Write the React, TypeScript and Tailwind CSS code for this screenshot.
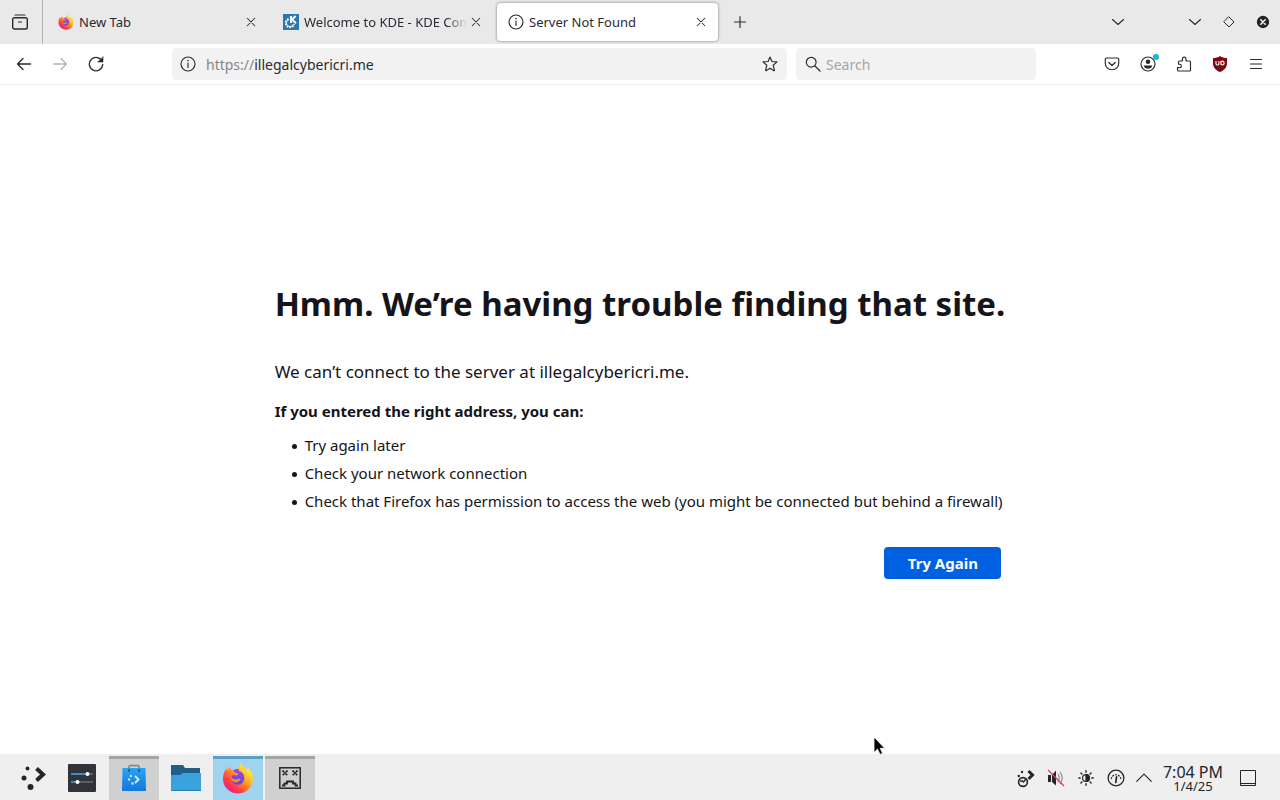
import { useState } from "react";
import type { ReactNode } from "react";

type IconProps = { className?: string; children: ReactNode };

function Icon({ className = "size-4", children }: IconProps) {
  return (
    <svg
      viewBox="0 0 16 16"
      className={`shrink-0 ${className}`}
      fill="none"
      stroke="currentColor"
      strokeWidth="1.15"
      strokeLinecap="round"
      strokeLinejoin="round"
      aria-hidden="true"
    >
      {children}
    </svg>
  );
}

function FirefoxLogo({ className }: { className: string }) {
  return (
    <svg viewBox="0 0 32 32" className={`shrink-0 ${className}`} aria-hidden="true">
      <defs>
        <linearGradient id="fx-body" x1="0.85" y1="0.1" x2="0.15" y2="0.9">
          <stop offset="0" stopColor="#fff14f" />
          <stop offset="0.3" stopColor="#ffc12f" />
          <stop offset="0.55" stopColor="#ff7a2a" />
          <stop offset="0.8" stopColor="#ff3550" />
          <stop offset="1" stopColor="#e8258a" />
        </linearGradient>
        <linearGradient id="fx-core" x1="0.5" y1="0" x2="0.4" y2="1">
          <stop offset="0" stopColor="#a243e6" />
          <stop offset="1" stopColor="#5a4fd0" />
        </linearGradient>
      </defs>
      <path
        d="M19.500 0.500c.3 3.400 2.700 5 5 7.300l1.200-2c3.600 2.800 5.600 7.200 5.300 12C30.500 25.700 24 31.500 16 31.500S1 25 1 17.200c0-4.700 1.200-8 3.500-11.200l.5 3 2.500-4.500C8 6.500 9 7.500 10.500 8.200c3.500-.6 5-1 6-2.700.9-1.700 1.500-3.500 3-5z"
        fill="url(#fx-body)"
      />
      <path
        d="M11 9c1.500-1.800 4-2.500 6.500-1.500l-1.500 1.500c3.500 0 6.500 3 6.300 7.300-.2 3.800-3 6.400-6.600 6.400-3.800 0-6.800-3-6.500-6.600 0-1.400.6-2 1.400-2.600 1.200-.7 2.600-.5 3.600.2.900-.8 2.100-.9 2.100-1.600 0-1-2.500-.7-3-1.400-.3-.7-1-1.300-2.300-1.700z"
        fill="url(#fx-core)"
      />
      <path
        d="M8.500 14.500c2 2.200 4.500 3.700 7 2.700 1.500-.6 2.700-.5 3.300.3-1 1-2.600 2.900-5 2.900-2.500 0-5-2.400-5.300-5.900z"
        fill="#ff8a28"
      />
    </svg>
  );
}

function KdeLogo() {
  return (
    <svg viewBox="0 0 16 16" className="size-4 shrink-0" aria-hidden="true">
      <rect width="16" height="16" fill="#2a78b0" />
      <circle cx="7" cy="9" r="4.500" fill="none" stroke="#fff" strokeWidth="1.500" strokeDasharray="1.700 1.200" />
      <circle cx="7" cy="9" r="3.600" fill="none" stroke="#fff" strokeWidth="1" />
      <path d="M6 1h10v9H6z" fill="#2a78b0" />
      <path d="M8 2v7M12.700 2 9 5.500 13 9.200" fill="none" stroke="#fff" strokeWidth="1.900" />
    </svg>
  );
}

function InfoIcon() {
  return (
    <Icon>
      <circle cx="8" cy="8" r="7" />
      <path d="M8 7v4.500" />
      <path d="M8 4.500v.1" strokeWidth="1.600" />
    </Icon>
  );
}

function ChevronDown({ className = "size-4" }: { className?: string }) {
  return (
    <Icon className={className}>
      <path d="m2.500 5.500 5.500 5 5.500-5" />
    </Icon>
  );
}

function TabClose({ label }: { label: string }) {
  return (
    <button type="button" aria-label={label} className="flex size-6 shrink-0 items-center justify-center text-[#333338]">
      <Icon className="size-3">
        <path d="m3 3 10 10M13 3 3 13" strokeWidth="1.400" />
      </Icon>
    </button>
  );
}

type TabProps = { title: string; icon: ReactNode; active?: boolean; faded?: boolean };

function Tab({ title, icon, active = false, faded = false }: TabProps) {
  return (
    <div
      className={`flex h-[38px] w-[221px] min-w-0 items-center gap-[5px] rounded-sm pr-[5px] pl-[11px] ${
        active ? "bg-white shadow-[0_0_3px_rgba(0,0,0,0.5)]" : ""
      }`}
    >
      {icon}
      <button
        type="button"
        className={`min-w-0 flex-1 overflow-hidden text-left text-[13px] leading-5 whitespace-nowrap ${
          faded ? "-mr-2 [mask-image:linear-gradient(to_left,transparent,black_20px)]" : ""
        }`}
      >
        {title}
      </button>
      <TabClose label={`Close ${title}`} />
    </div>
  );
}

function ToolButton({ label, children, className = "" }: { label: string; children: ReactNode; className?: string }) {
  return (
    <button type="button" aria-label={label} className={`flex h-8 w-9 shrink-0 items-center justify-center ${className}`}>
      {children}
    </button>
  );
}

function TabBar() {
  return (
    <header className="flex h-11 items-center bg-[#e9e9e9] text-[#2b2a33]">
      <button
        type="button"
        aria-label="Recent browsing"
        className="flex h-full w-[43px] shrink-0 items-center justify-center border-r border-[#b5b5b5] pr-[3px]"
      >
        <Icon>
          <path d="M3 1h10" />
          <rect x="0.700" y="3.800" width="14.600" height="11.200" rx="1.800" strokeWidth="1.400" />
          <path d="M6.500 8h3" />
        </Icon>
      </button>
      <nav aria-label="Open tabs" className="ml-1 flex min-w-0 items-center gap-1">
        <Tab title="New Tab" icon={<FirefoxLogo className="size-4" />} />
        <Tab title="Welcome to KDE - KDE Community" icon={<KdeLogo />} faded />
        <Tab title="Server Not Found" icon={<InfoIcon />} active />
      </nav>
      <button type="button" aria-label="Open a new tab" className="ml-1 flex size-9 shrink-0 items-center justify-center">
        <Icon>
          <path d="M8 2.500v11M2.500 8h11" />
        </Icon>
      </button>
      <div className="flex-1" />
      <button type="button" aria-label="List all tabs" className="mr-[43px] flex size-[34px] shrink-0 items-center justify-center">
        <ChevronDown />
      </button>
      <button type="button" aria-label="Minimize" className="flex size-[34px] shrink-0 items-center justify-center">
        <ChevronDown />
      </button>
      <button type="button" aria-label="Maximize" className="flex size-[34px] shrink-0 items-center justify-center">
        <Icon>
          <path d="m8 3 5 5-5 5-5-5z" strokeWidth="1" />
        </Icon>
      </button>
      <button type="button" aria-label="Close window" className="flex size-[34px] shrink-0 items-center justify-center">
        <Icon>
          <circle cx="8" cy="8" r="5.600" fill="#232629" stroke="#232629" />
          <path d="m5.800 5.800 4.400 4.400m0-4.400-4.400 4.400" stroke="#fff" strokeWidth="1.400" />
        </Icon>
      </button>
    </header>
  );
}

function NavBar() {
  const [query, setQuery] = useState("");
  return (
    <div className="flex h-[41px] items-center border-b border-[#ededed] bg-white px-[6px] text-[#2b2a33]">
      <ToolButton label="Back">
        <Icon>
          <path d="M14.500 8H1.500M7 2.500 1.500 8 7 13.500" strokeWidth="1.400" />
        </Icon>
      </ToolButton>
      <ToolButton label="Forward" className="text-[#b4b4b6]">
        <Icon>
          <path d="M1.500 8h13M9 2.500 14.500 8 9 13.500" strokeWidth="1.300" />
        </Icon>
      </ToolButton>
      <ToolButton label="Reload">
        <Icon>
          <path d="M14.200 5.500A6.700 6.700 0 1 0 14.700 8.500" strokeWidth="1.300" />
          <path d="M15 1v5H10z" fill="currentColor" strokeWidth="0.600" />
        </Icon>
      </ToolButton>
      <div className="w-[58px] shrink" />
      <div className="flex h-8 min-w-0 flex-1 items-center rounded-sm bg-[#f2f2f2] pr-[9px] pl-2">
        <InfoIcon />
        <div className="ml-[10px] min-w-0 flex-1 pt-px text-[14px] leading-5" role="textbox" aria-label="Address" tabIndex={0}>
          <span className="text-[#85858a]">https://</span>illegalcybericri.me
        </div>
        <button type="button" aria-label="Bookmark this page">
          <Icon>
            <path
              d="m8 1 1.900 4.500 5.100.4-3.800 3.400 1.200 4.700c.1.600-.4.900-.9.600L8 12.300l-3.500 2.300c-.5.300-1 0-.9-.6l1.200-4.700L1 5.900l5.100-.4z"
            />
          </Icon>
        </button>
      </div>
      <label className="ml-[9px] flex h-8 w-[240px] items-center gap-[5px] rounded-sm bg-[#f2f2f2] pl-[9px]">
        <Icon>
          <circle cx="6.200" cy="6.200" r="4.900" />
          <path d="m10 10 5 5" strokeWidth="1.300" />
        </Icon>
        <input
          type="text"
          aria-label="Search"
          placeholder="Search"
          value={query}
          onChange={(event) => setQuery(event.target.value)}
          className="min-w-0 flex-1 bg-transparent pt-px text-[14px] leading-5 outline-none placeholder:text-[#a5a5a8]"
        />
      </label>
      <div className="w-[58px] shrink" />
      <ToolButton label="Save to Pocket">
        <Icon>
          <path d="M2.500 2h11a1.200 1.200 0 0 1 1.200 1.200V7.500a6.700 6.200 0 0 1-13.400 0V3.200A1.200 1.200 0 0 1 2.500 2z" />
          <path d="m4.800 6.500 3.200 3 3.200-3" strokeWidth="1.300" />
        </Icon>
      </ToolButton>
      <ToolButton label="Account" className="relative">
        <Icon>
          <circle cx="8" cy="8" r="7" />
          <circle cx="8" cy="5.800" r="2.300" fill="currentColor" stroke="none" />
          <path d="M3.900 9.500h8.200c0 2.200-2 3.300-4.100 3.300s-4.100-1.100-4.100-3.300z" fill="currentColor" stroke="none" />
        </Icon>
        <span className="absolute top-[6px] right-[7px] size-[6px] rounded-full bg-[#14b8d6]" />
      </ToolButton>
      <ToolButton label="Extensions">
        <Icon>
          <path d="M2.500 15h11a1 1 0 0 0 1-1V6a1 1 0 0 0-1-1H10V2.900a1.800 1.800 0 0 0-3.600 0V5H3.500a1 1 0 0 0-1 1v2.200h1.200a1.700 1.700 0 0 1 0 3.400H1.500V14a1 1 0 0 0 1 1z" />
        </Icon>
      </ToolButton>
      <ToolButton label="uBlock Origin">
        <svg viewBox="0 0 16 16" className="size-4" aria-hidden="true">
          <path d="M8 0c2 1.500 4.300 2 7 2v5.500c0 4.500-3.500 7-7 8.500-3.500-1.500-7-4-7-8.500V2c2.700 0 5-.5 7-2z" fill="#800610" />
          <path d="M4 5v2.800c0 1.600 2.900 1.600 2.900 0V5m2 0v4M8.900 7a1.600 1.900 0 1 0 3.200 0 1.600 1.900 0 1 0-3.200 0" fill="none" stroke="#fff" strokeWidth="1.100" />
        </svg>
      </ToolButton>
      <ToolButton label="Application menu">
        <Icon>
          <path d="M2.500 3.500h11M2.500 8h11M2.500 12.500h11" />
        </Icon>
      </ToolButton>
    </div>
  );
}

const suggestions = [
  "Try again later",
  "Check your network connection",
  "Check that Firefox has permission to access the web (you might be connected but behind a firewall)",
];

function ErrorPage() {
  return (
    <main className="flex flex-1 flex-col items-center justify-center bg-white px-4 pt-6">
      <div className="flex flex-col text-[15px] leading-[22px]">
        <h1 className="text-[33px] leading-10 font-bold">Hmm. We’re having trouble finding that site.</h1>
        <p className="mt-9 text-[17px] leading-6">We can’t connect to the server at illegalcybericri.me.</p>
        <p className="mt-4 font-bold">If you entered the right address, you can:</p>
        <ul className="mt-3 space-y-[6px] pl-[17px]">
          {suggestions.map((text) => (
            <li key={text} className="flex gap-2">
              <span className="mt-[10px] size-[5px] shrink-0 rounded-full bg-[#15141a]" />
              {text}
            </li>
          ))}
        </ul>
        <button type="button" className="mt-[35px] mr-1 h-8 w-[117px] self-end rounded-sm bg-[#0061e0] font-bold text-[#fbfbfe]">
          Try Again
        </button>
      </div>
    </main>
  );
}

type TaskState = "idle" | "open" | "active";

const taskStyles: Record<TaskState, string> = {
  idle: "border-transparent",
  open: "border-[#a3a5a7] bg-[#d0d0d1]",
  active: "border-[#5a9fc4] bg-[#9fd3ee]",
};

function Task({ label, state = "idle", children }: { label: string; state?: TaskState; children: ReactNode }) {
  return (
    <button type="button" aria-label={label} className={`flex h-11 w-[50px] items-center justify-center border-t-3 pb-[3px] ${taskStyles[state]}`}>
      {children}
    </button>
  );
}

function Taskbar() {
  return (
    <footer className="flex h-[46px] items-end bg-[#efeff0] pr-[13px] pl-[5px] text-[#232629]">
      <div className="flex gap-[2px]">
        <Task label="Application launcher">
          <svg viewBox="0 0 32 32" className="ml-2 size-8" aria-hidden="true">
            <circle cx="9.500" cy="6.500" r="1.900" fill="#232629" />
            <circle cx="6" cy="16" r="2.500" fill="#232629" />
            <circle cx="12.500" cy="25" r="3" fill="#232629" />
            <path d="m18.500 6.500 6.500 6-6.500 6" fill="none" stroke="#232629" strokeWidth="4" />
          </svg>
        </Task>
        <Task label="System settings">
          <svg viewBox="0 0 28 28" className="size-7" aria-hidden="true">
            <rect width="28" height="28" rx="1" fill="#30343a" />
            <path d="M3 10h16M3 18h6" stroke="#3daee9" strokeWidth="1.500" />
            <path d="M20 10h5M10 18h15" stroke="#686d73" strokeWidth="1.500" />
            <circle cx="19.500" cy="10" r="2" fill="#fff" />
            <circle cx="9.500" cy="18" r="2" fill="#fff" />
          </svg>
        </Task>
        <Task label="Discover" state="open">
          <svg viewBox="0 0 28 30" className="h-[30px] w-7" aria-hidden="true">
            <defs>
              <linearGradient id="bag" x1="0" y1="0" x2="0" y2="1">
                <stop offset="0" stopColor="#2aa3f0" />
                <stop offset="1" stopColor="#1577dc" />
              </linearGradient>
            </defs>
            <path d="M9 7V4q0-1.500 1.500-1.500h7Q19 2.500 19 4v3" fill="none" stroke="#7e8589" strokeWidth="1.600" />
            <path d="M2.500 5h23l.5 23H2z" fill="url(#bag)" />
            <path d="M8 7.500h2m8 0h2" stroke="#0c559e" strokeWidth="2" />
            <circle cx="11" cy="13" r="1" fill="#fff" />
            <circle cx="9" cy="16.500" r="1.200" fill="#bfe5ff" />
            <circle cx="12.500" cy="20.500" r="1.300" fill="#bfe5ff" />
            <path d="m15 13 3.500 3.500L15 20" fill="none" stroke="#d7efff" strokeWidth="1.800" />
          </svg>
        </Task>
        <Task label="File manager">
          <svg viewBox="0 0 30 28" className="h-7 w-[30px]" aria-hidden="true">
            <path d="M0 1h12l2 3h15v9H0z" fill="#205f87" />
            <path d="M0 11h9l3-2h18v18H0z" fill="#3aa2dc" />
            <path d="M0 26h30v1H0z" fill="#2b80b1" />
          </svg>
        </Task>
        <Task label="Firefox" state="active">
          <FirefoxLogo className="size-8" />
        </Task>
        <Task label="Terminated window" state="open">
          <svg viewBox="0 0 22 22" className="size-[22px]" fill="none" stroke="#232629" aria-hidden="true">
            <rect x="0.800" y="0.800" width="20.400" height="20.400" strokeWidth="1.500" />
            <path d="m3.500 3.500 5 5m0-5-5 5m10-5 5 5m0-5-5 5" strokeWidth="1.800" strokeDasharray="1.900 0.500" />
            <path d="M3 18.500h2.500v-2H8v-2h6v2h2.500v2H19" strokeWidth="1.800" />
          </svg>
        </Task>
      </div>
      <div className="flex-1" />
      <div className="flex h-11 items-center">
        <button type="button" aria-label="Input status" className="flex w-[30px] justify-center">
          <svg viewBox="0 0 20 20" className="size-5" fill="none" stroke="#232629" aria-hidden="true">
            <circle cx="6" cy="4" r="1.200" fill="#232629" stroke="none" />
            <circle cx="2.800" cy="8" r="1.200" fill="#232629" stroke="none" />
            <path d="m12.500 3 4 4-4 4" strokeWidth="3" />
            <circle cx="7" cy="14" r="4.400" strokeWidth="1.600" />
            <path d="M7 14.500 10 11M4 13h3" strokeWidth="1.500" />
          </svg>
        </button>
        <button type="button" aria-label="Volume muted" className="flex w-[30px] justify-center">
          <svg viewBox="0 0 18 18" className="size-[18px]" fill="none" aria-hidden="true">
            <path d="M1 6h3v7H1zM5 6l4-4.500v15L5 13z" fill="#232629" />
            <path d="M11 5q2.500 4 0 8M13 3q4.500 6 0 12" stroke="#8b8d8f" strokeWidth="1.200" />
            <path d="m1 1 16 16" stroke="#cf4650" strokeWidth="1.200" />
          </svg>
        </button>
        <button type="button" aria-label="Brightness" className="flex w-[30px] justify-center">
          <Icon>
            <circle cx="8" cy="8" r="3.400" />
            <path d="M8 4.600a3.400 3.400 0 0 1 0 6.800z" fill="currentColor" />
            <path d="M8 .8v1.400M8 13.800v1.400M.8 8h1.400M13.800 8h1.400m-12.300-5.100 1 1m8.200 8.200 1 1m0-10.200-1 1m-8.200 8.200-1 1" strokeWidth="1.400" />
          </Icon>
        </button>
        <button type="button" aria-label="Power profile" className="flex w-[30px] justify-center">
          <Icon className="size-[18px]">
            <circle cx="8" cy="8" r="7" />
            <path d="M3.800 8.500A4.300 4.300 0 0 1 12.200 8.500" strokeWidth="1" strokeDasharray="1 1.600" />
            <path d="m8.500 7-.7 5" strokeWidth="1.500" />
          </Icon>
        </button>
        <button type="button" aria-label="Show hidden icons" className="flex w-[26px] justify-center">
          <Icon className="size-[18px]">
            <path d="M1.500 11 8 4.500l6.500 6.500" strokeWidth="1" />
          </Icon>
        </button>
        <button type="button" className="flex w-[72px] flex-col items-center">
          <span className="text-base leading-4">7:04 PM</span>
          <span className="text-[13px] leading-[13px]">1/4/25</span>
        </button>
        <button type="button" aria-label="Show desktop" className="flex w-[38px] justify-center">
          <svg viewBox="0 0 16 16" className="size-4" fill="none" stroke="#232629" aria-hidden="true">
            <path d="M.5.5h15v15H.5zM1 13.500h14" />
          </svg>
        </button>
      </div>
    </footer>
  );
}

export default function App() {
  return (
    <div className="relative flex min-h-screen flex-col font-['Noto_Sans',sans-serif] text-[#15141a]">
      <TabBar />
      <NavBar />
      <ErrorPage />
      <Taskbar />
      <svg viewBox="0 0 12 20" className="pointer-events-none absolute top-[736px] left-[873px] h-5 w-3" aria-hidden="true">
        <path d="M1 1v15.500l3.500-3.400 2.500 5.400 2.600-1.200-2.400-5h4.500z" fill="#000" stroke="#fff" strokeWidth="0.800" />
      </svg>
    </div>
  );
}
